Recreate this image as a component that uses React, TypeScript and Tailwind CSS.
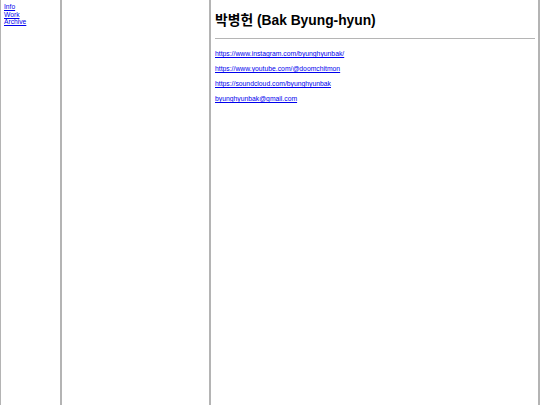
export default function App() {
  const links = [
    "https://www.instagram.com/byunghyunbak/",
    "https://www.youtube.com/@doomchitmon",
    "https://soundcloud.com/byunghyunbak",
    "byunghyunbak@gmail.com",
  ];
  return (
    <div
      className="flex h-[405px] w-[540px] bg-white overflow-hidden"
      style={{ fontFamily: '"Liberation Sans", Arial, "Noto Sans CJK KR", sans-serif' }}
    >
      <div className="w-[62px] shrink-0 border-l border-r-2 border-[#b4b4b4] px-[3px] pt-[3px]">
        <div className="flex flex-col text-[6.7px] leading-[7.6px]">
          <a href="#" className="text-[#0000ee] underline">Info</a>
          <a href="#" className="text-[#0000ee] underline">Work</a>
          <a href="#" className="text-[#0000ee] underline">Archive</a>
        </div>
      </div>
      <div className="w-[149px] shrink-0 border-r-2 border-[#b4b4b4]" />
      <div className="flex-1 border-r-2 border-[#b4b4b4] pl-[4px] pr-[3px] pt-[12px]">
        <h1 className="text-[13.8px] font-bold leading-[17px] text-black">
          박병헌 (Bak Byung-hyun)
        </h1>
        <div className="mt-[9px] border-t border-[#b5b5b5]" />
        <div className="mt-[11px] flex flex-col gap-[7px] text-[6.8px] leading-[8px]">
          {links.map((l) => (
            <a key={l} href="#" className="text-[#0000ee] underline">
              {l}
            </a>
          ))}
        </div>
      </div>
    </div>
  );
}
